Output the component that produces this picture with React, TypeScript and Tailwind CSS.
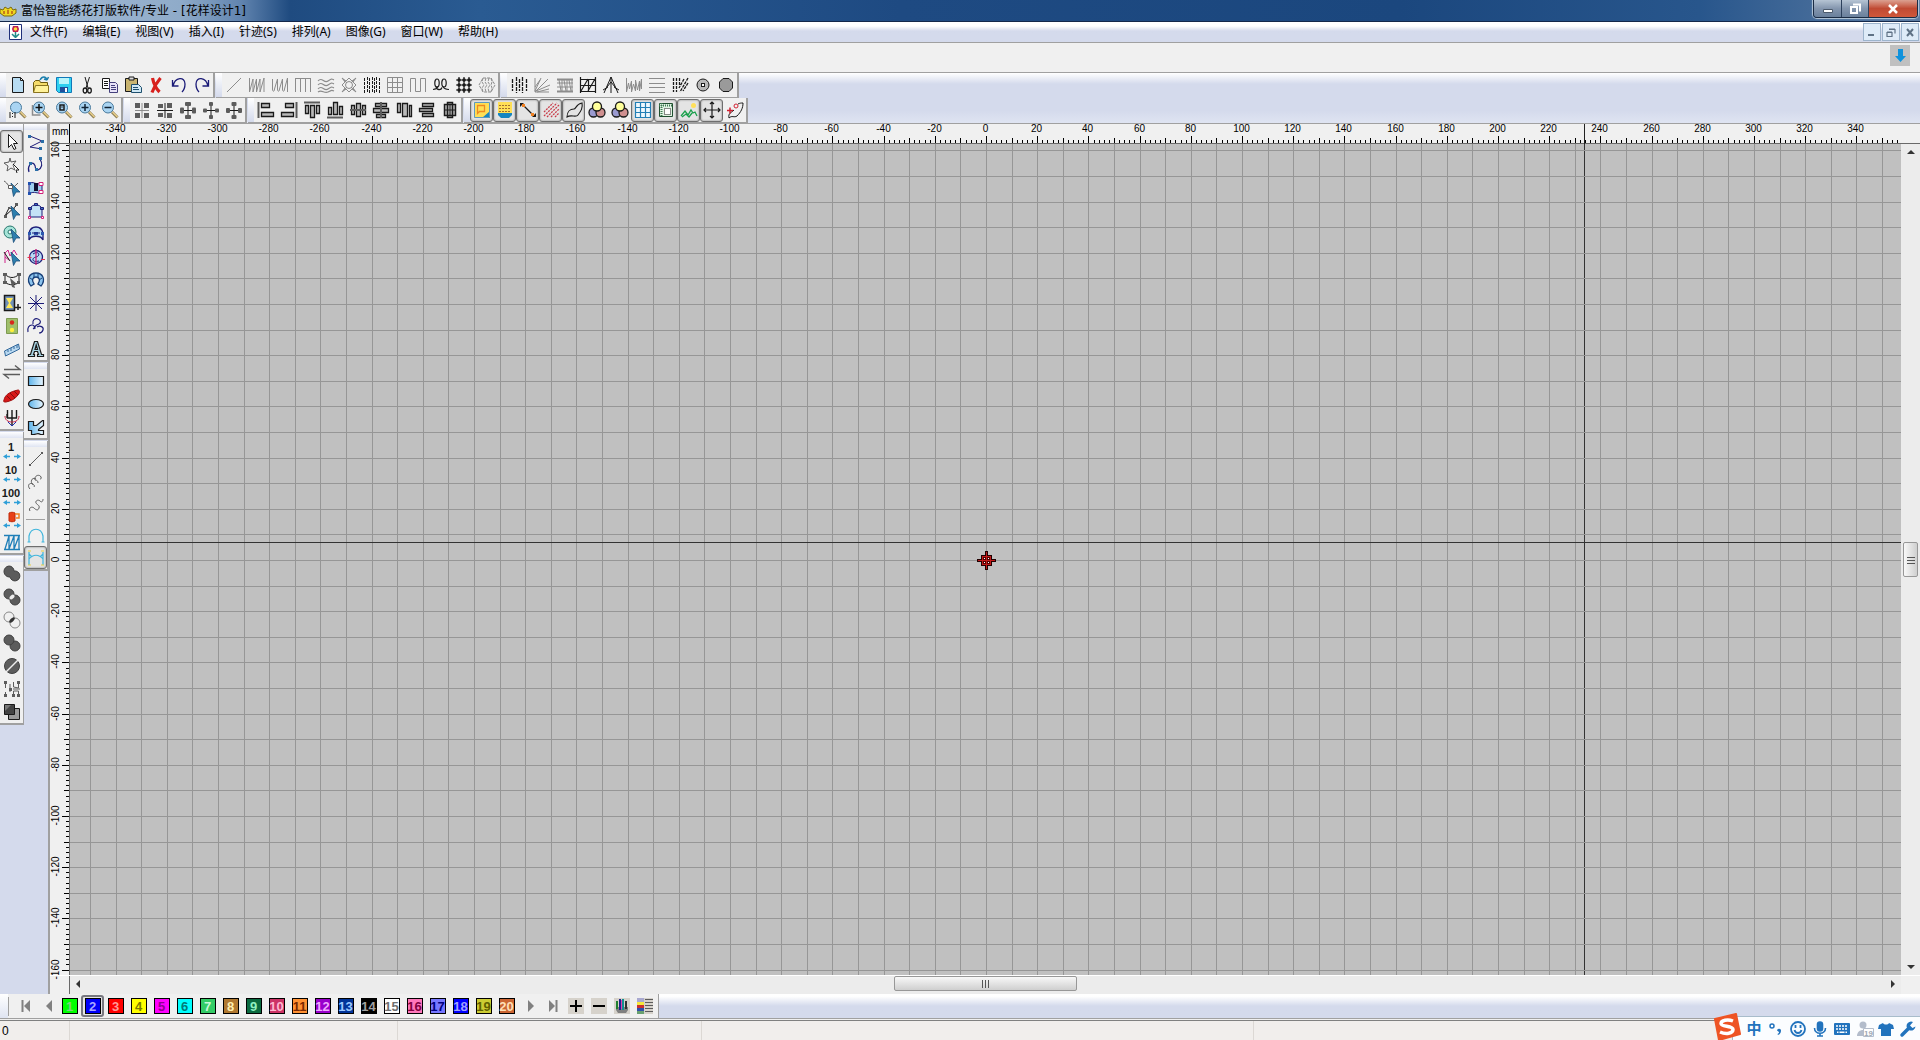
import React from "react";

type Drawings = Record<string, React.ReactNode>;

const K = "#1a1a1a";
const G = "#8c8c8c";
const D = "#5c5c5c";
const NAVY = "#1c1c78";
const BLUE = "#2a6fa8";
const LENS = "#a9d4f2";

const lens = (inner: React.ReactNode) => (
  <>
    <path d="M12 12l5.5 5.5" stroke="#8a7a50" strokeWidth="3" />
    <path d="M12.5 12l5 5" stroke="#e8cf8a" strokeWidth="1.5" />
    <circle cx="8" cy="7.5" r="5.5" fill={LENS} stroke="#4a7a9c" />
    {inner}
  </>
);
const rgb = (
  <>
    <circle cx="6.5" cy="12.5" r="4.5" fill="#9a9ad0" stroke={K} strokeWidth="1.3" />
    <circle cx="13.5" cy="12.5" r="4.5" fill="#d09090" stroke={K} strokeWidth="1.3" />
    <circle cx="10" cy="6.5" r="4.5" fill="#ffff9a" stroke={K} strokeWidth="1.3" />
  </>
);
const spread = (w: number) => (
  <>
    <path d="M10 5v11M4 10.500h12" stroke={K} strokeWidth="1" />
    <g fill={D}>
      <rect x={10 - w / 2} y="2" width={w} height="4" rx="1" />
      <rect x={10 - w / 2} y="15" width={w} height="4" rx="1" />
      <rect x="2" y={10.5 - w / 2} width="4" height={w} rx="1" />
      <rect x="14" y={10.5 - w / 2} width="4" height={w} rx="1" />
    </g>
  </>
);
const pointer = (
  <path d="M9 5l9 9h-4l-2.500 4.500z" fill="#2d7fae" stroke="#1d4f7c" strokeWidth=".8" />
);
const arrows = (
  <g stroke="#2f9fd8" fill="#2f9fd8">
    <path d="M3 16.500h5M12 16.500h5" strokeWidth="1.500" />
    <path d="M1 16.500l4-2.500v5zM19 16.500l-4-2.500v5z" stroke="none" />
  </g>
);
const countIcon = (n: string) => (
  <>
    <text x="9" y="11" textAnchor="middle" fontSize="11" fontWeight="700" fill={K} fontFamily="Liberation Sans, sans-serif">
      {n}
    </text>
    {arrows}
  </>
);

const drawings: Drawings = {
  newFile: <path d="M4.500 2.500h8l3 3v12h-11zM12.500 2.500v3h3" fill="#b8dcf2" stroke={K} />,
  open: (
    <>
      <path d="M2.500 17V7.500l2-2h4l1 2h7V17z" fill="#f5dc6a" stroke="#6b5a10" />
      <path d="M2.500 17.500l2-7h13v7z" fill="#fff29a" stroke="#8a7420" />
      <path d="M9 5c2-4 6-4 7 0m0 0l-3-1m3 1l1.500-3" stroke="#1b7fae" strokeWidth="1.500" />
    </>
  ),
  save: (
    <>
      <path d="M2.500 2.500h15v15h-13l-2-2z" fill="#2fd0f0" stroke="#1178b8" />
      <path d="M5 3h10v6H5z" fill="#b8f5fb" />
      <path d="M6 12h8v5H6z" fill="#1e4f9c" />
      <path d="M11 13h2v4h-2z" fill="#fff" />
    </>
  ),
  cut: (
    <>
      <path d="M8 2l3 11M12.500 2L9 13" stroke={K} />
      <ellipse cx="8" cy="15.500" rx="1.800" ry="2.500" stroke={K} strokeWidth="1.300" />
      <ellipse cx="12.500" cy="15.500" rx="1.800" ry="2.500" stroke={K} strokeWidth="1.300" />
    </>
  ),
  copy: (
    <>
      <path d="M2.500 3.500h7v10h-7zM4 6.500h4M4 8.500h4M4 10.500h4" fill="#fff" stroke={K} />
      <path d="M9.500 7.500h6l2 2v8h-8zM11 10.500h4M11 12.500h5M11 14.500h5" fill="#e8e4f8" stroke="#44407c" />
    </>
  ),
  paste: (
    <>
      <path d="M2.500 3.500h12v13h-12z" fill="#c8b470" stroke={K} />
      <path d="M6 2h5v3H6z" fill="#ddd" stroke={K} />
      <path d="M8.500 9.500h7l3 3v5h-10zM10 12.500h5M10 14.500h6" fill="#cfe8f5" stroke="#1e506e" />
    </>
  ),
  remove: <path d="M6.500 3c1 5 4 11 7 14M14.500 3C11 7 8 12 6 17.500" stroke="#d8201c" strokeWidth="3.200" />,
  undo: <path d="M3.500 5v6h6M4 11C6 2 16 1 16 9c0 3-1 6-3 8" stroke={NAVY} strokeWidth="1.300" />,
  redo: <path d="M16.500 5v6h-6M16 11C14 2 4 1 4 9c0 3 1 6 3 8" stroke={NAVY} strokeWidth="1.300" />,
  line: <path d="M3 17L17 3" stroke={G} />,
  zig1: <path d="M2.500 3v14L6 4v13L9.500 4v13L13 4v13l4-14v14" stroke={G} />,
  zig2: <path d="M2.500 4v10c0 3 2 3 2 0L7.500 4v10c0 3 2 3 2 0L12.500 4v10c0 3 2 3 2 0L17.500 3v14" stroke={G} />,
  comb: <path d="M2.500 17V3.500h15V17M7.500 4v13M12.500 4v13M2 3.500h16" stroke={G} />,
  waves: <path d="M2 6c4-5 6 3 10 0s4-2 6-1M2 10c4-5 6 3 10 0s4-2 6-1M2 14c4-5 6 3 10 0s4-2 6-1M2 17c4-3 6 2 10 0s4-2 6-1" stroke={G} strokeWidth="1.200" />,
  star: (
    <>
      <path d="M3 3l4 3 3-3 3 3 4-3-3 4 3 3-3 3 3 4-4-3-3 3-3-3-4 3 3-4-3-3 3-3z" stroke={G} />
      <circle cx="10" cy="10" r="3.500" stroke={G} />
      <path d="M3 3l5 5M17 3l-5 5M3 17l5-5M17 17l-5-5" stroke={G} />
    </>
  ),
  dashes: (
    <path
      d="M2.500 3v15M5.500 2v15M7.500 3v15M10.500 2v15M12.500 3v15M14.500 2v15M17.500 3v15"
      stroke={K}
      strokeDasharray="3 1"
    />
  ),
  grid3: <path d="M2.500 2.500h15v15h-15zM7.500 3v15M12.500 3v15M3 7.500h15M3 12.500h15" stroke={G} />,
  square: <path d="M2.500 17V3.500h5v13h5v-13h5V17" stroke={G} />,
  loops: (
    <>
      <ellipse cx="6" cy="8" rx="2.200" ry="4" stroke={K} strokeWidth="1.200" />
      <ellipse cx="13" cy="8" rx="2.200" ry="4" stroke={K} strokeWidth="1.200" />
      <path d="M2 14.500c3 0 4-1 5-3M5 11.500c1 4 5 4 6 1M12 11.500c1 2 3 3 6 3" stroke={K} strokeWidth="1.200" />
    </>
  ),
  hash: (
    <>
      <path d="M5 2v16M10 2v16M15 2v16M2 5h16M2 10h16M2 15h16" stroke={K} strokeWidth="1.200" />
      <path d="M5 5h.1M10 5h.1M15 5h.1M5 10h.1M10 10h.1M15 10h.1M5 15h.1M10 15h.1M15 15h.1" stroke={K} strokeWidth="3.500" strokeLinecap="round" />
    </>
  ),
  hex: (
    <path
      d="M6 3h8l4 7-4 7H6l-4-7zM6 3l-1 4 2 3-2 3 1 4M9 3L8 7l2 3-2 3 1 4M12 3l-1 4 2 3-2 3 1 4M14 3l1 4-1 3 1 3-1 4"
      stroke={G}
      strokeDasharray="3 1"
    />
  ),
  bars1: (
    <path d="M3.500 4v12M7.500 2v16M10.500 4v12M13.500 2v16M17.500 4v12" stroke={K} strokeWidth="1.300" strokeDasharray="4 1" />
  ),
  fan: <path d="M3 3v14h14M3 17L16 4M3 16L9 3M4 16l14-6M3 12l5-7M5 17l12-3" stroke={G} />,
  ribs: (
    <>
      <path d="M2 4.500h16M2 16.500h16" stroke={G} strokeWidth="2" />
      <path d="M4 5l2 11M7 5v11M9 5l2 11M12 5v11M14 5l2 11M17 5v11M2 8h16M2 12h16" stroke={G} />
    </>
  ),
  net: <path d="M2.500 2v16M17.500 2v16M2 4.500h16M2 16.500h16M2 10.500h16M10.500 4v12M3 16L10 4M10 16l7-12" stroke={K} strokeWidth="1.200" />,
  tent: <path d="M10 2L3 18M10 2l7 16M10 2v16M10 7l-4 5M10 7l4 5M7 12l-5 3M13 12l5 3" stroke={K} />,
  noise: <path d="M2.500 3v14l2-9 1 6 2-8v11l2-8 2 7V5l2 10 2-9v10l2-12v10" stroke={G} />,
  hlines: <path d="M2 3.500h16M2 8.500h16M2 12.500h16M2 17.500h16" stroke={G} />,
  slants: <path d="M3.500 3v14M6.500 3v14M18 3l-8 14M14 4L9 13M18 8l-5 8M9.500 3v7" stroke={K} strokeWidth="1.300" strokeDasharray="3 1" />,
  target: (
    <>
      <circle cx="10" cy="10" r="6" fill="#b8b8b8" stroke={K} />
      <rect x="8.500" y="8.500" width="3" height="3" fill="#fff" stroke={K} />
    </>
  ),
  disc: <path d="M7 3.500h6L16.500 7v6L13 16.500H7L3.500 13V7z" fill="#9a9a9a" stroke={K} />,
  zoom1: (
    <>
      {lens(null)}
      <path d="M2 12v6M7 12v6M4.500 13v1M4.500 16v1" stroke={K} />
    </>
  ),
  zoomBox: (
    <>
      <path d="M1.500 5v10h8" stroke={G} strokeWidth="1.500" />
      {lens(<path d="M8 4v7M4.500 7.500h7" stroke="#111" strokeWidth="1.500" />)}
    </>
  ),
  zoomFit: lens(<path d="M6 5h4v5H6zM7.500 7h1" stroke={K} strokeWidth="1.500" />),
  zoomIn: lens(<path d="M8 4v7M4.500 7.500h7" stroke="#123" strokeWidth="1.500" />),
  zoomOut: lens(<path d="M4.500 7.500h7" stroke="#123" strokeWidth="1.500" />),
  tile1: (
    <>
      <path d="M3 3h5v5H3zM12 3h5v5h-5zM3 13h5v5H3zM12 13h5v5h-5z" fill={D} />
      <path d="M10 3v15M3 10.500h14" stroke={G} />
    </>
  ),
  tile2: (
    <>
      <path d="M3 4h5v4H3zM12 3h5v5h-5zM3 13h5v4H3zM12 13h5v5h-5z" fill={D} />
      <path d="M10 3v15M2 10.500h16" stroke={K} />
    </>
  ),
  spread1: spread(6),
  spread2: spread(4),
  spread3: spread(5),
  alignL: (
    <>
      <path d="M2.500 2v16" stroke={D} strokeWidth="2" />
      <path d="M5.500 3.500h8v4h-8zM5.500 12.500h12v4h-12z" fill="#b9b9b9" stroke={K} strokeWidth="1.300" />
    </>
  ),
  alignR: (
    <>
      <path d="M17.500 2v16" stroke={D} strokeWidth="2" />
      <path d="M6.500 3.500h8v4h-8zM2.500 12.500h12v4h-12z" fill="#b9b9b9" stroke={K} strokeWidth="1.300" />
    </>
  ),
  alignT: (
    <>
      <path d="M2 2.500h16" stroke={D} strokeWidth="2" />
      <path d="M3.500 5.500h3v8h-3zM8.500 5.500h4v12h-4zM14.500 5.500h3v8h-3z" fill="#b9b9b9" stroke={K} strokeWidth="1.300" />
    </>
  ),
  alignB: (
    <>
      <path d="M2 17.500h16" stroke={D} strokeWidth="2" />
      <path d="M3.500 7.500h3v7h-3zM8.500 2.500h4v12h-4zM14.500 6.500h3v8h-3z" fill="#b9b9b9" stroke={K} strokeWidth="1.300" />
    </>
  ),
  alignM: (
    <>
      <path d="M3.500 5.500h3v9h-3zM8.500 3.500h4v13h-4zM14.500 5.500h3v9h-3z" fill="#b9b9b9" stroke={K} strokeWidth="1.300" />
      <path d="M2 10h16" stroke={D} strokeWidth="2" />
    </>
  ),
  alignC: (
    <>
      <path d="M4.500 3.500h11v3h-11zM2.500 8.500h15v4h-15zM5.500 14.500h9v3h-9z" fill="#b9b9b9" stroke={K} strokeWidth="1.300" />
      <path d="M10 2v16" stroke={D} strokeWidth="2" />
    </>
  ),
  distH: <path d="M3.500 3.500h3v9h-3zM8.500 3.500h5v13h-5zM15.500 5.500h2v11h-2z" fill="#b9b9b9" stroke={K} strokeWidth="1.300" />,
  distV: <path d="M5.500 3.500h11v3h-11zM2.500 8.500h13v3h-13zM5.500 13.500h11v3h-11z" fill="#b9b9b9" stroke={K} strokeWidth="1.300" />,
  center: (
    <>
      <path d="M4.500 4.500h11v11h-11zM7.500 2.500h5v15h-5z" fill="#b9b9b9" stroke={K} strokeWidth="1.500" />
      <path d="M10 5v10M4 10h12" stroke={K} />
    </>
  ),
  view1: (
    <>
      <rect x="2" y="2" width="16" height="16" fill="#ffdf55" />
      <path d="M18 11v7h-8z" fill="#1685c0" />
      <path d="M5.500 5.500h7v6h-5l-2 2z" stroke="#ee8a20" strokeWidth="1.300" />
      <path d="M2.500 2.500h15v15h-15z" stroke="#5d9ac0" />
    </>
  ),
  view2: (
    <>
      <path d="M3 2h14v11H3z" fill="#ffdf55" />
      <path d="M3 13h14v2l-3 3H6l-3-3z" fill="#1685c0" />
      <path d="M4 5.500h12M4 8.500h12M4 11.500h12" stroke="#a07030" strokeDasharray="2 1" />
    </>
  ),
  nodes: (
    <>
      <path d="M5 5l10 10" stroke={K} strokeWidth="1.200" />
      <path d="M2 3h4l-4 4zM18 17h-4l4-4z" fill={K} />
      <path d="M4 4h3v3H4zM13 13h3v3h-3z" fill="#f08020" />
    </>
  ),
  hatch: <path d="M3 12l9-9M3 16L16 3M6 17L18 5M10 17l8-8M14 17l4-4" stroke="#c83a48" strokeWidth="1.300" strokeDasharray="2 1" />,
  curve: <path d="M3 17c0-5 3-8 7-8 2 0 2-5 8-6 1 5-1 8-4 12-2 3-7-1-11 2z" stroke={K} strokeWidth="1.100" />,
  rgb,
  bigGrid: <path d="M2.500 2.500h15v15h-15zM7.500 3v14M12.500 3v14M3 7.500h14M3 12.500h14" stroke="#237fb5" strokeWidth="1.200" fill="#eff8fd" />,
  ruler: (
    <>
      <path d="M3.500 3.500h13v13h-13z" stroke="#204f30" fill="#dff2e2" />
      <path d="M3 5.500h14M5.500 3v14" stroke="#3d7a50" strokeWidth="2" strokeDasharray="1 1" />
      <path d="M8.500 8.500h6v6h-6z" stroke={K} strokeDasharray="1 1" fill="#fff" />
    </>
  ),
  image: (
    <>
      <circle cx="14.500" cy="5.500" r="2.500" fill="#ffe05a" />
      <path d="M2 16l4-5 3 4 3-5 2 3 2-1 2 4M3 17l4-3 3 3 3-4" stroke="#1aa04c" strokeWidth="1.300" />
    </>
  ),
  cross: <path d="M10 2v16M2 10h16M8 4l2-2 2 2M8 16l2 2 2-2M4 8l-2 2 2 2M16 8l2 2-2 2" stroke={K} strokeWidth="1.200" />,
  anchor: (
    <>
      <path d="M4 18c-1-5 2-5 5-8M13 4c2-1 3-1 5-1 0 5-2 9-6 13-3 2-5-1-8 2" stroke={K} />
      <path d="M2 10.500h6M5 7.500v6" stroke="#d02030" strokeWidth="1.500" />
      <circle cx="11" cy="6" r="2" stroke="#d02030" />
    </>
  ),
  select: <path d="M6.500 2.500v13l3-3 2.500 5 2-1-2.500-5h4z" fill="#fff" stroke={K} />,
  lasso: (
    <>
      <path d="M8 3l1 4 5-1-3 4 2 5-4-2-4 3 1-5-4-3 5-1z" stroke={D} />
      <path d="M11 9l6 6h-3l1 3" stroke={K} fill="#fff" />
    </>
  ),
  node: (
    <>
      <path d="M2 3c4 2 5 7 7 7s4-2 7-5" stroke={D} />
      {pointer}
      <path d="M6.500 7.500h4v3h-4z" fill="#fff" stroke={D} />
    </>
  ),
  shapeNode: (
    <>
      <path d="M3 15L15 4M3 15l4-8 6 1" stroke={K} />
      <path d="M2 14h3v3H2zM13 2h3v3h-3zM6 6h2v2H6z" fill={D} />
      {pointer}
    </>
  ),
  circleNode: (
    <>
      <circle cx="8" cy="8" r="6" fill="#a6e4d8" stroke="#26756c" />
      <circle cx="8" cy="8" r="2" fill="#eefbf8" stroke="#26756c" />
      {pointer}
    </>
  ),
  cutNode: (
    <>
      <path d="M3 16V6l3-3 2 6 4-6 3 5M3 10l4 3" stroke="#d0208a" />
      <path d="M2 5l6 9" stroke={K} />
      {pointer}
    </>
  ),
  envelope: (
    <>
      <path d="M3 4.500c5 4 9 4 14 0v8c-5 3-9 3-14 0z" stroke={K} />
      <path d="M1 3h4v3H1zM15 3h4v3h-4zM1 11h4v3H1zM15 11h3v3h-3z" fill={D} />
      <path d="M8 8l7 6h-3l1 4-3-1z" fill={D} />
    </>
  ),
  hourglass: (
    <>
      <path d="M2.500 2.500h10v15h-10z" fill="#7190b8" stroke={K} strokeWidth="1.500" />
      <path d="M4 5h7l-3 5 3 5H4l3-5z" fill="#ffe95a" />
      <path d="M16 11v6M13 14.500h6" stroke={K} strokeWidth="1.500" />
    </>
  ),
  light: (
    <>
      <path d="M4.500 2.500h11v15h-11z" fill="#9fbf6b" stroke="#7d9a50" />
      <circle cx="10" cy="6.500" r="2.200" fill="#d8281c" />
      <circle cx="10" cy="14" r="2.200" fill="#fff03a" />
    </>
  ),
  measure: <path d="M2.500 12l14-7 1 5-14 7zM6 11v2M9 9v3M12 8v2M15 6v3" fill="#b8d8f0" stroke="#33699c" />,
  swap: <path d="M2 7.500h16l-5-4M18 12.500H2l5 4" stroke={D} strokeWidth="1.500" />,
  leaf: (
    <>
      <path d="M2 15c1-5 5-8 14-10 2 0 2 3 0 5-3 4-7 6-12 7-2 0-3 0-2-2z" fill="#d81818" stroke="#a01010" />
      <path d="M5 11l4 4M8 8l5 5M12 6l4 4" stroke="#801010" />
    </>
  ),
  fork: (
    <>
      <path d="M5.500 2v8h9V2M10 2v15M5 6v4" stroke={K} strokeWidth="1.400" />
      <path d="M3 8c0 4 3 6 7 6s7-2 7-6" stroke="#c02040" />
      <path d="M6 14l4 4 4-4" stroke="#2030b0" />
    </>
  ),
  step1: countIcon("1"),
  step10: countIcon("10"),
  step100: countIcon("100"),
  bobbin: (
    <>
      <path d="M7 4c2-1 4-1 6 0v8c-2 1-4 1-6 0z" fill="#e84018" stroke="#c02808" />
      <path d="M13 5h4v4h-3" stroke="#f08020" strokeWidth="1.500" />
      {arrows}
    </>
  ),
  trapez: <path d="M2 3.500h16M2 17.500h16M3 17L7 4v13l5-13v13l5-13v13" stroke="#1f7fb8" strokeWidth="1.300" />,
  union: <path d="M7 2a5 5 0 0 1 5 5 5 5 0 1 1-4 6 5.500 5.500 0 1 1-1-11z" fill={D} stroke="#404040" />,
  overlap: (
    <>
      <circle cx="7" cy="7" r="5" fill={D} stroke="#404040" />
      <circle cx="13" cy="13" r="5" fill={D} stroke="#404040" />
      <ellipse cx="10" cy="10" rx="3" ry="1.800" transform="rotate(-45 10 10)" fill="#eee" />
    </>
  ),
  outline: (
    <>
      <circle cx="7" cy="7" r="5" stroke="#888" />
      <circle cx="13" cy="13" r="5" stroke="#888" />
      <ellipse cx="10" cy="10" rx="3.500" ry="1.600" transform="rotate(-45 10 10)" fill="#333" />
    </>
  ),
  merge: (
    <>
      <circle cx="13" cy="13" r="5" fill={D} stroke="#404040" />
      <circle cx="7" cy="7" r="5" fill={D} stroke="#404040" />
    </>
  ),
  split: (
    <>
      <circle cx="10" cy="10" r="7.500" fill={D} stroke="#404040" />
      <path d="M4 16L16 4" stroke="#eee" strokeWidth="1.500" />
    </>
  ),
  weld: (
    <>
      <path d="M3.500 3v6M3.500 13v4M8 5v8M11.500 3v5l5 1V3M11.500 17v-5h5v5M11 10h7" stroke={D} />
      <path d="M2 2h3v3H2zM2 15h3v3H2zM7 9h3v3H7zM15 2h3v3h-3zM15 15h3v3h-3zM10 15h3v3h-3z" fill={D} />
    </>
  ),
  shadow: (
    <>
      <path d="M6.500 6.500h11v11h-11z" fill="#999" stroke={K} />
      <path d="M2.500 2.500h10v10h-10z" fill="#444" stroke={K} />
      <path d="M3 3h6L3 9z" fill="#777" />
    </>
  ),
  poly: (
    <>
      <path d="M4 4l12 5-12 6 12 2" stroke={NAVY} />
      <path d="M2 3h3v3H2zM15 8h3v3h-3zM13 15h3v3h-3z" fill={BLUE} />
    </>
  ),
  spline: (
    <>
      <path d="M3 17C1 12 5 6 8 9s0 8 4 6 5-6 2-11" stroke={NAVY} strokeWidth="1.200" />
      <path d="M3 7h3v3H3zM9 13h3v3H9zM13 2h3v3h-3z" fill={BLUE} />
    </>
  ),
  column: (
    <>
      <path d="M3 6c4-4 7 2 13-1v9c-5 3-7-2-13 2z" fill="#9fd0f0" stroke={NAVY} />
      <path d="M8 5h4v8H8z" fill="#101030" />
      <path d="M13 4.500h4v3h-4zM13 12.500h4v3h-4z" fill="#fff" stroke="#d0207a" />
      <path d="M2 4h3v3H2zM2 14h3v3H2z" fill="#2050b0" />
    </>
  ),
  house: (
    <>
      <path d="M4 16V8c1-3 3-4 6-4s5 1 6 4v8z" fill="#c4e2f6" stroke={NAVY} />
      <path d="M8.500 2.500h3v2h-3zM2.500 6.500h3v2h-3zM14.500 6.500h3v2h-3z" fill="#3a70c0" stroke={NAVY} />
      <path d="M2.500 15.500h2v2h-2zM15.500 15.500h2v2h-2z" fill="#fff" stroke="#d0207a" />
    </>
  ),
  arch: (
    <>
      <path d="M3 16V9c2-8 12-8 14 0v7c-2-5-12-5-14 0z" fill="#b8dcf4" stroke={NAVY} strokeWidth="1.300" />
      <path d="M8 8h4v3H8zM2 8h3v3H2zM15 8h3v3h-3z" fill="#2b58b0" />
      <path d="M6 9h8" stroke={NAVY} />
    </>
  ),
  ring: (
    <>
      <circle cx="10" cy="10" r="6.500" fill="#b8dcf4" stroke={NAVY} strokeWidth="1.300" />
      <path d="M7 7c6-4 8 2 3 3s-4 6 3 4" stroke={NAVY} />
      <path d="M10 2v16" stroke="#d0207a" strokeWidth="1.300" />
      <path d="M1.500 10.500h4M3.500 8v5M15 12.500h4" stroke="#e03050" />
    </>
  ),
  horseshoe: (
    <>
      <path d="M5 16C0 10 3 3 10 3s10 7 5 13l-3-2c3-4 1-7-2-7s-5 3-2 7z" fill="#8cc4ee" stroke="#173f78" strokeWidth="1.300" />
      <path d="M8 4v4M12 4v4M4 8l3 2M16 8l-3 2" stroke="#173f78" />
    </>
  ),
  burst: <path d="M10 2v16M2 10.500h16M4 4l12 12M16 4L4 16" stroke={NAVY} />,
  branches: <path d="M2 16c-1-4 1-7 4-7s3 3 1 4M7 8c-1-4 2-6 5-5s3 4 1 5-5 1-4 5M11 11c3-2 7 0 6 3s-3 3-4 3" stroke={NAVY} strokeWidth="1.200" />,
  text: <path d="M2.500 17.500v-2h2l4-13h3l4 13h2v2h-6v-2h1l-1-3H8.500l-1 3h1v2zM9 10.500h2.500L10.200 6z" fill="#a8d4e4" stroke={K} strokeWidth="1.200" />,
  rect: <path d="M2.500 5.500h15v9h-15z" fill="url(#sky)" stroke={K} strokeWidth="1.200" />,
  ellipse: <ellipse cx="10" cy="10" rx="7.500" ry="4.500" fill="url(#sky)" stroke={K} strokeWidth="1.200" />,
  cutShape: <path d="M2.500 4.500h5v4h3l6-5h1v5l-5 4v1h5v4h-3c-3-2-4 0-7 0h-2v-4h-3z" fill="url(#sky)" stroke={K} strokeWidth="1.200" />,
  seg: (
    <>
      <path d="M4 16L16 4" stroke={D} />
      <path d="M3 15h2v2H3zM15 3h2v2h-2z" fill={D} />
    </>
  ),
  arc3: <path d="M4 17c-3-3-1-7 3-5M6 12c-2-4 1-7 4-5M9 8c-1-5 5-6 6-3 1 2-1 2-1 2M6 12c2 0 3 2 2 3M9 8c2 0 3 1 3 3" stroke={D} />,
  scurve: <path d="M4 16c-2-3 2-5 4-3s4 3 5 0-2-3-3-5 2-4 4-2 3 0 3-2" stroke={D} />,
  dome: <path d="M3 17v-6c2-9 12-9 14 0v6M1.500 17h3M15.500 17h3" stroke="#3fb5dc" strokeWidth="1.200" />,
  bridge: (
    <>
      <path d="M3 4v13M17 4v13M3 11c4-5 10-5 14 0M3 6l3 3M17 6l-3 3" stroke="#3fb5dc" strokeWidth="1.200" />
      <path d="M2 3h3M15 3h3M2 17h3M15 17h3" stroke="#e8d040" />
    </>
  ),
  first: (
    <>
      <path d="M8.500 4v12" stroke="#808080" strokeWidth="2" />
      <path d="M16 4v12l-6-6z" fill="#808080" />
    </>
  ),
  prev: <path d="M15 4v12l-6-6z" fill="#808080" />,
  next: <path d="M8 4v12l6-6z" fill="#808080" />,
  last: (
    <>
      <path d="M13.500 4v12" stroke="#808080" strokeWidth="2" />
      <path d="M6 4v12l6-6z" fill="#808080" />
    </>
  ),
  plus: (
    <>
      <path d="M2 2h16v16H2z" fill="#d6d2cb" />
      <path d="M10 4v12M4 10h12" stroke="#000" strokeWidth="2" />
    </>
  ),
  minus: (
    <>
      <path d="M2 2h16v16H2z" fill="#d6d2cb" />
      <path d="M4 10h12" stroke="#000" strokeWidth="2" />
    </>
  ),
  threads: (
    <>
      <path d="M2 2h16v16H2z" fill="#d6d2cb" />
      <path d="M4 11v3l2 3h8l2-3v-3z" fill="#808080" />
      <path d="M5 5v8" stroke="#208030" strokeWidth="2" />
      <path d="M8 3v11" stroke="#20208a" strokeWidth="2" />
      <path d="M11 3v11" stroke="#109090" strokeWidth="2" />
      <path d="M14 5v8" stroke="#303030" strokeWidth="2" />
      <path d="M9.500 4v9" stroke="#e040b0" />
    </>
  ),
  list: (
    <>
      <path d="M2 2h16v16H2z" fill="#d6d2cb" />
      <path d="M2 2h7v4H2z" fill="#a9a9d0" />
      <path d="M2 6h7v3H2z" fill="#f6e83a" />
      <path d="M2 9h7v3H2z" fill="#c83030" />
      <path d="M2 12h7v3H2z" fill="#3050a8" />
      <path d="M2 15h7v3H2z" fill="#68a070" />
      <path d="M10 3.500h8M10 6.500h8M10 9.500h8M10 12.500h8M10 15.500h8" stroke={D} />
    </>
  ),
};

const names1 = [
  ["newFile", "open", "save", "cut", "copy", "paste", "remove", "undo", "redo"],
  ["line", "zig1", "zig2", "comb", "waves", "star", "dashes", "grid3", "square", "loops", "hash", "hex"],
  ["bars1", "fan", "ribs", "net", "tent", "noise", "hlines", "slants", "target", "disc"],
];
const names2 = [
  ["zoom1", "zoomBox", "zoomFit", "zoomIn", "zoomOut"],
  ["tile1", "tile2", "spread1", "spread2", "spread3"],
  ["alignL", "alignR", "alignT", "alignB", "alignM", "alignC", "distH", "distV", "center"],
  ["view1*", "view2*", "nodes*", "hatch*", "curve*", "rgb", "rgb", "bigGrid*", "ruler*", "image*", "cross*", "anchor"],
];
const left1 = [
  ["select*", "lasso", "node", "shapeNode", "circleNode", "cutNode", "envelope", "hourglass", "light", "measure", "swap", "leaf", "fork"],
  ["step1", "step10", "step100", "bobbin", "trapez"],
  ["union", "overlap", "outline", "merge", "split", "weld", "shadow"],
];
const left2 = [
  ["poly", "spline", "column", "house", "arch", "ring", "horseshoe", "burst", "branches", "text"],
  ["rect", "ellipse", "cutShape"],
  ["seg", "arc3", "scurve", "|", "dome", "bridge*"],
];

function Tool({ name }: { name: string }) {
  const on = name.endsWith("*");
  const key = on ? name.slice(0, -1) : name;
  return (
    <button
      type="button"
      aria-label={key}
      aria-pressed={on}
      className={
        "flex h-[23px] w-[23px] shrink-0 items-center justify-center " +
        (on ? "rounded-[3px] border border-[#6e6e6e] bg-[#e4e4e4] shadow-[inset_0_0_2px_#777]" : "")
      }
    >
      <svg viewBox="0 0 20 20" className="h-5 w-5 shrink-0" fill="none">
        {drawings[key]}
      </svg>
    </button>
  );
}

function Row({ groups, label }: { groups: string[][]; label: string }) {
  return (
    <div role="toolbar" aria-label={label} className="flex h-[25px] gap-px">
      {groups.map((g, i) => (
        <div key={i} className="flex items-center border-r-2 border-b border-[#a0a0a0] bg-[#f0f0f0]">
          <span className="h-full w-1.5 bg-linear-to-b from-white to-[#d4daec]" />
          {g.map((n, j) => (
            <Tool key={j} name={n} />
          ))}
        </div>
      ))}
    </div>
  );
}

function Column({ groups, label }: { groups: string[][]; label: string }) {
  return (
    <div role="toolbar" aria-label={label} className="flex w-6 flex-col gap-px bg-[#d4daec]">
      {groups.map((g, i) => (
        <div key={i} className="flex flex-col border-r border-b-2 border-[#a0a0a0] bg-[#f0f0f0]">
          <span className="h-1.5 w-full bg-linear-to-b from-white to-[#dfe4f2]" />
          {g.map((n, j) =>
            n === "|" ? (
              <span key={j} className="mx-0.5 my-[3px] h-px bg-[#a0a0a0]" />
            ) : (
              <Tool key={j} name={n} />
            ),
          )}
        </div>
      ))}
    </div>
  );
}

const PX_PER_MM = 2.56;
const at = (mm: number) => Math.round(mm * PX_PER_MM);
const range = (from: number, to: number, step: number) => {
  const out: number[] = [];
  for (let v = from; v <= to; v += step) out.push(v);
  return out;
};
const CURSOR = { x: 598, y: -18 };

function HorizontalRuler() {
  return (
    <svg className="h-5 w-full min-w-0 flex-1" aria-label="horizontal ruler">
      <svg x="50%" overflow="visible" shapeRendering="crispEdges">
        {range(-356, 356, 2).map((v) => (
          <rect key={v} x={at(v)} y={v % 20 === 0 ? 12 : v % 10 === 0 ? 14 : 16} width="1" height={v % 20 === 0 ? 7 : v % 10 === 0 ? 5 : 3} fill="#000" />
        ))}
        {range(-340, 340, 20).map((v) => (
          <text key={v} x={at(v)} y="8" textAnchor="middle" fontSize="10" fill="#000" fontFamily="Liberation Sans, sans-serif">
            {v}
          </text>
        ))}
        <rect x={CURSOR.x} y="0" width="1" height="20" fill="#222" />
      </svg>
    </svg>
  );
}

function VerticalRuler() {
  return (
    <svg className="h-full w-[19px] shrink-0 overflow-visible" aria-label="vertical ruler">
      <svg y="50%" overflow="visible" shapeRendering="crispEdges">
        {range(-162, 162, 2).map((v) => (
          <rect key={v} x={v % 20 === 0 ? 12 : v % 10 === 0 ? 14 : 16} y={at(v)} width={v % 20 === 0 ? 7 : v % 10 === 0 ? 5 : 3} height="1" fill="#000" />
        ))}
        {range(-160, 160, 20).map((v) => (
          <text key={v} transform={`translate(9 ${at(-v)}) rotate(-90)`} textAnchor="middle" fontSize="10" fill="#000" fontFamily="Liberation Sans, sans-serif">
            {v}
          </text>
        ))}
        <rect x="0" y={CURSOR.y} width="19" height="1" fill="#222" />
      </svg>
    </svg>
  );
}

function Canvas() {
  return (
    <svg className="h-full min-w-0 flex-1 border-l border-[#696969] bg-[#c0c0c0]" aria-label="design canvas">
      <svg x="50%" overflow="visible" shapeRendering="crispEdges">
        {range(-350, 350, 10).map((v) => (
          <rect key={v} x={at(v)} y="0" width="1" height="100%" fill="#969696" />
        ))}
        <rect x={CURSOR.x} y="0" width="1" height="100%" fill="#333" />
      </svg>
      <svg y="50%" overflow="visible" shapeRendering="crispEdges">
        {range(-160, 160, 10).map((v) => (
          <rect key={v} x="0" y={at(v)} width="100%" height="1" fill="#969696" />
        ))}
        <rect x="0" y={CURSOR.y} width="100%" height="1" fill="#333" />
      </svg>
      <svg x="50%" y="50%" overflow="visible" shapeRendering="crispEdges">
        <path d="M-1-9h3v4h4v4h4v3h-4v4h-4v4h-3v-4h-4v-4h-4v-3h4v-4h4z" fill="#200000" />
        <path d="M0-8h1v17H0zM-8 0H9v1H-8zM-4-4h9v9h-9z" fill="#c01818" />
        <path d="M-3-3h3v3h-3zM1-3h3v3H1zM-3 1h3v3h-3zM1 1h3v3H1z" fill="#500" />
        <path d="M-2-2h1v1h-1zM2-2h1v1H2zM-2 2h1v1h-1zM2 2h1v1H2z" fill="#fff" />
      </svg>
    </svg>
  );
}

const arrowPaths = {
  up: "M4 10l4-4 4 4z",
  down: "M4 6l4 4 4-4z",
  left: "M10 4L6 8l4 4z",
  right: "M6 4l4 4-4 4z",
};
function Arrow({ dir }: { dir: keyof typeof arrowPaths }) {
  return (
    <button type="button" aria-label={"scroll " + dir} className="h-4 w-4">
      <svg viewBox="0 0 16 16" className="h-4 w-4">
        <path d={arrowPaths[dir]} fill="#333" />
      </svg>
    </button>
  );
}

const swatches: [string, string][] = [
  ["bg-[#00ff00]", "text-[#80d080]"],
  ["bg-[#0000f8]", "text-[#a8a8ff]"],
  ["bg-[#ff0000]", "text-[#ff9a9a]"],
  ["bg-[#ffff00]", "text-[#7a7a00]"],
  ["bg-[#ff00ff]", "text-[#900090]"],
  ["bg-[#00ffff]", "text-[#007a7a]"],
  ["bg-[#33cc66]", "text-[#c8f8d8]"],
  ["bg-[#b07830]", "text-[#fff0b0]"],
  ["bg-[#0a6a40]", "text-[#90f0c0]"],
  ["bg-[#cc3366]", "text-[#ffb8d0]"],
  ["bg-[#ff9133]", "text-[#7a2800]"],
  ["bg-[#9900cc]", "text-[#f0a8ff]"],
  ["bg-[#003399]", "text-[#9cc8ff]"],
  ["bg-[#000000]", "text-[#a0a0a0]"],
  ["bg-[#ffffff]", "text-[#707070]"],
  ["bg-[#ff77bb]", "text-[#800040]"],
  ["bg-[#7777ff]", "text-[#000080]"],
  ["bg-[#0000ff]", "text-[#a0a0ff]"],
  ["bg-[#cccc33]", "text-[#606000]"],
  ["bg-[#cc6633]", "text-[#ffe0b8]"],
];

const menus = ["文件(F)", "编辑(E)", "视图(V)", "插入(I)", "针迹(S)", "排列(A)", "图像(G)", "窗口(W)", "帮助(H)"];

function TitleBar() {
  return (
    <header className="flex h-[22px] items-start justify-between border-b border-[#14284a] bg-[linear-gradient(90deg,#a9bfd6_0,#8fabc9_180px,#6285b0_240px,#1f4b80_290px,#2a5b92_480px,#1e4a82_900px,#1b477e_1400px,#28568c_1700px,#5d7da4_100%)]">
      <div className="flex h-[21px] items-center gap-1">
        <svg viewBox="0 0 17 16" className="h-4 w-[17px]">
          <path d="M0 6l3 1 2-3 3 2 3-2 2 3 3-1v4l-4 3H4L0 10z" fill="#f0d820" stroke="#7a6a10" />
          <path d="M4 8v3M8 7v4M12 8v3" stroke="#a02010" />
        </svg>
        <h1 className="font-['DejaVu_Sans','Noto_Sans_CJK_SC',sans-serif] text-xs text-black">富怡智能绣花打版软件/专业 - [花样设计1]</h1>
      </div>
      <div className="mr-0.5 flex h-[18px] rounded-b-[4px] border border-t-0 border-[#1b2c44] shadow-[0_0_1px_1px_#b9cadb]">
        <button type="button" aria-label="最小化" className="flex w-7 items-center justify-center rounded-bl-[3px] border-r border-[#2c405c] bg-linear-to-b from-[#b6c4d4] via-[#8496ae] to-[#6a809c]">
          <svg viewBox="0 0 14 12" className="h-3 w-3.5"><path d="M2.500 6.500h9v3h-9z" fill="#fff" stroke="#4c5a6c" /></svg>
        </button>
        <button type="button" aria-label="还原" className="flex w-[27px] items-center justify-center border-r border-[#2c405c] bg-linear-to-b from-[#b6c4d4] via-[#8496ae] to-[#6a809c]">
          <svg viewBox="0 0 14 14" className="h-3.5 w-3.5"><path d="M5 2.500h7v7M3 5h6v6H3z" fill="none" stroke="#fff" strokeWidth="2" /></svg>
        </button>
        <button type="button" aria-label="关闭" className="flex w-12 items-center justify-center rounded-br-[3px] bg-linear-to-b from-[#dba091] via-[#c04a33] to-[#d0573a]">
          <svg viewBox="0 0 14 12" className="h-3 w-3.5"><path d="M3 2l8 8M11 2l-8 8" stroke="#fff" strokeWidth="2.500" /></svg>
        </button>
      </div>
    </header>
  );
}

function MenuBar() {
  return (
    <nav className="flex h-[21px] items-center justify-between border-b border-[#a0a0a0] bg-linear-to-b from-white from-20% to-[#d4daec] to-45%">
      <div className="flex items-center">
        <svg viewBox="0 0 13 16" className="mr-2 ml-[9px] h-4 w-[13px]">
          <path d="M.5.500h12v15H.5z" fill="#fff" stroke="#20307a" />
          <path d="M4 2h5l1 3-1 3H4L3 5z" fill="#c02050" />
          <circle cx="6.500" cy="5" r="1.800" fill="#ffe040" />
          <path d="M6.500 8v6M3 10l3 3M10 10l-3 3" stroke="#208a8a" strokeWidth="1.500" />
        </svg>
        <div className="flex gap-[15px]">
          {menus.map((m) => (
            <button key={m} type="button" className="text-xs whitespace-nowrap text-black">
              {m}
            </button>
          ))}
        </div>
      </div>
      <div className="mr-px flex gap-px">
        {["M3 10h6", "M5 4.500h6v4M3 7.500h5v4H3zM3 7h5M5 4h6", "M4 4l6 7M10 4l-6 7"].map((d, i) => (
          <button key={i} type="button" aria-label={["最小化窗口", "还原窗口", "关闭窗口"][i]} className="flex h-[18px] w-[18px] items-center justify-center border border-[#9db4cc] bg-[#deebf8]">
            <svg viewBox="0 0 14 14" className="h-3.5 w-3.5"><path d={d} fill="none" stroke="#5f7286" strokeWidth={i === 1 ? 1.2 : 2} /></svg>
          </button>
        ))}
      </div>
    </nav>
  );
}

function PaletteBar() {
  return (
    <div className="flex h-[25px] border-b border-[#a0a0a0] bg-linear-to-b from-white from-10% to-[#d4daec] to-50%">
      <div role="toolbar" aria-label="palette" className="flex items-center border-r border-[#a0a0a0] bg-[#f0f0f0] pr-0.5">
        <span className="h-full w-2 bg-linear-to-b from-white to-[#dfe4f2]" />
        <span className="mr-0.5 h-[19px] w-0.5 border-l border-[#a0a0a0]" />
        <Tool name="first" />
        <Tool name="prev" />
        {swatches.map(([bg, fg], i) => (
          <button
            key={i}
            type="button"
            className={
              "flex h-[22px] w-[23px] items-center justify-center " +
              (i === 1 ? "rounded-[3px] border-2 border-[#77777f] bg-[#e4e4e4]" : "")
            }
          >
            <span className={"flex h-4 w-4 shrink-0 items-center justify-center border border-black font-['Liberation_Sans',sans-serif] text-[13px] leading-none font-bold " + bg + " " + fg}>
              {i + 1}
            </span>
          </button>
        ))}
        {["next", "last", "plus", "minus", "threads", "list"].map((n) => (
          <Tool key={n} name={n} />
        ))}
      </div>
    </div>
  );
}

function InputMethodBar() {
  const c = "#2273bd";
  return (
    <aside aria-label="input method" className="absolute right-0 bottom-0 flex h-6 items-center border-t border-l border-[#a8bccb] bg-[#fbfdff] pr-px">
      <svg viewBox="0 0 28 28" className="-mt-1 -ml-5 h-7 w-7">
        <path d="M2 6L23 1l4 20-21 6z" fill="#ee5424" stroke="#ee5424" strokeWidth="2" strokeLinejoin="round" />
        <path d="M20 8c-5-2-12-1-12 2.500s12 2 12 6-7 5-13 2.500" fill="none" stroke="#fff" strokeWidth="3.500" />
      </svg>
      <button type="button" className="ml-0.5 w-[22px] text-[15px] leading-none font-bold text-[#2273bd]">中</button>
      <button type="button" aria-label="标点" className="w-[22px]">
        <svg viewBox="0 0 22 22" className="h-[22px] w-[22px]">
          <circle cx="7" cy="8" r="2" fill="none" stroke={c} strokeWidth="1.500" />
          <path d="M12 12.500a2 2 0 1 1 4 .5c0 2-2 4-3 4l-.5-1c1-.5 1.500-1 1.500-2" fill={c} />
        </svg>
      </button>
      <button type="button" aria-label="表情" className="w-[22px]">
        <svg viewBox="0 0 22 22" className="h-[22px] w-[22px]" fill="none" stroke={c} strokeWidth="1.800">
          <circle cx="11" cy="11" r="7" />
          <path d="M7.500 12c1 4 6 4 7 0M8.500 7v3M13.500 7v3" />
        </svg>
      </button>
      <button type="button" aria-label="语音" className="w-[22px]">
        <svg viewBox="0 0 22 22" className="h-[22px] w-[22px]" fill="none" stroke={c} strokeWidth="1.600">
          <rect x="8.500" y="4" width="5" height="9" rx="2.500" fill={c} />
          <path d="M5.500 10c0 7 11 7 11 0M11 15v3M8 18h6" />
        </svg>
      </button>
      <button type="button" aria-label="软键盘" className="w-[22px]">
        <svg viewBox="0 0 22 22" className="h-[22px] w-[22px]">
          <rect x="3" y="5" width="16" height="12" rx="1" fill={c} />
          <path d="M5 8h12M5 11h12" stroke="#fff" strokeWidth="1.600" strokeDasharray="2 1" />
          <path d="M6 14.300h10" stroke="#fff" strokeWidth="1.600" strokeDasharray="1.500 1 5 1" />
        </svg>
      </button>
      <button type="button" aria-label="账号" className="relative w-[22px]">
        <svg viewBox="0 0 22 22" className="h-[22px] w-[22px]">
          <circle cx="10" cy="7" r="3.500" fill="#b3bccb" />
          <path d="M4 18c0-8 12-8 12 0z" fill="#b3bccb" />
          <path d="M10.500 10.500h10v8h-10z" fill="#fff" stroke="#b3bccb" />
          <text x="15.500" y="17.500" textAnchor="middle" fontSize="8" fontWeight="700" fill="#a0a8b4" fontFamily="Liberation Sans, sans-serif">19</text>
        </svg>
      </button>
      <button type="button" aria-label="皮肤" className="w-[22px]">
        <svg viewBox="0 0 22 22" className="h-[22px] w-[22px]">
          <path d="M8 5c1 2 5 2 6 0l4 2 1 4h-3v7H6v-7H3l1-4z" fill={c} />
        </svg>
      </button>
      <button type="button" aria-label="工具箱" className="w-[22px]">
        <svg viewBox="0 0 22 22" className="h-[22px] w-[22px]">
          <path d="M5 17l7-7" stroke={c} strokeWidth="3.500" strokeLinecap="round" />
          <path d="M16 4a4.500 4.500 0 1 0 2.500 4.500l-3 1.500-2.500-2.500z" fill={c} />
        </svg>
      </button>
    </aside>
  );
}

export default function App() {
  return (
    <div className="relative flex h-screen flex-col overflow-hidden bg-[#f0f0f0] font-['Noto_Sans','Noto_Sans_CJK_SC',sans-serif]">
      <svg className="absolute h-0 w-0" aria-hidden="true">
        <linearGradient id="sky">
          <stop offset="0" stopColor="#5fb4ea" />
          <stop offset="1" stopColor="#e8f6ff" />
        </linearGradient>
      </svg>
      <TitleBar />
      <MenuBar />
      <div className="flex h-[30px] items-center justify-end border-b border-[#a0a0a0] pr-2.5 pb-1">
        <button type="button" aria-label="下载" className="flex h-[21px] w-5 items-center justify-center bg-[#c0c0c0]">
          <svg viewBox="0 0 12 14" className="h-3.5 w-3"><path d="M4 0h5v7h3l-5.500 6L1 7h3z" fill="#0f92dc" /></svg>
        </button>
      </div>
      <div className="border-b border-[#a0a0a0] bg-[linear-gradient(180deg,#fff_0,#d4daec_22%,#d4daec_75%,#dfe4f2_100%)]">
        <Row groups={names1} label="stitches" />
        <Row groups={names2} label="view" />
      </div>
      <main className="flex min-h-0 flex-1">
        <div className="flex border-r-2 border-[#a0a0a0] bg-[#d4daec]">
          <Column groups={left1} label="edit tools" />
          <Column groups={left2} label="drawing tools" />
        </div>
        <div className="flex min-w-0 flex-1 flex-col">
          <div className="flex h-5 border-b border-[#696969] pr-[19px]">
            <span className="w-5 shrink-0 border-r border-black pl-0.5 font-['Liberation_Sans',sans-serif] text-[10px] leading-4">mm</span>
            <HorizontalRuler />
          </div>
          <div className="flex min-h-0 flex-1">
            <VerticalRuler />
            <Canvas />
            <div className="flex w-[19px] flex-col items-center justify-between bg-[#ececec]">
              <Arrow dir="up" />
              <button type="button" aria-label="vertical scroll" className="flex h-[35px] w-[15px] items-center justify-center rounded-[2px] border border-[#979797] bg-linear-to-r from-[#f8f8f8] to-[#cfcfcf]">
                <svg viewBox="0 0 8 8" className="h-2 w-2"><path d="M0 1.500h8M0 4.500h8M0 7.500h8" stroke="#555" /></svg>
              </button>
              <Arrow dir="down" />
            </div>
          </div>
          <div className="flex h-[19px] border-t border-white pr-[19px] pl-[19px]">
            <div className="flex flex-1 items-start justify-between border-l border-[#696969] bg-[#ececec]">
              <Arrow dir="left" />
              <button type="button" aria-label="horizontal scroll" className="flex h-[15px] w-[183px] items-center justify-center rounded-[2px] border border-[#979797] bg-linear-to-b from-[#f8f8f8] to-[#cfcfcf]">
                <svg viewBox="0 0 8 8" className="h-2 w-2"><path d="M.5 0v8M3.500 0v8M6.500 0v8" stroke="#555" /></svg>
              </button>
              <Arrow dir="right" />
            </div>
          </div>
        </div>
      </main>
      <PaletteBar />
      <footer className="mt-px flex h-5 items-center border-t border-[#808080] bg-[#f1eeec] font-['Liberation_Sans',sans-serif] text-xs">
        <span className="flex h-full w-[70px] items-center border-r border-[#dcd8d4] pl-0.5">0</span>
        <span className="h-full w-[328px] border-r border-[#dcd8d4]" />
        <span className="h-full w-[304px] border-r border-[#dcd8d4]" />
        <span className="h-full w-[552px] border-r border-[#dcd8d4]" />
      </footer>
      <InputMethodBar />
    </div>
  );
}
